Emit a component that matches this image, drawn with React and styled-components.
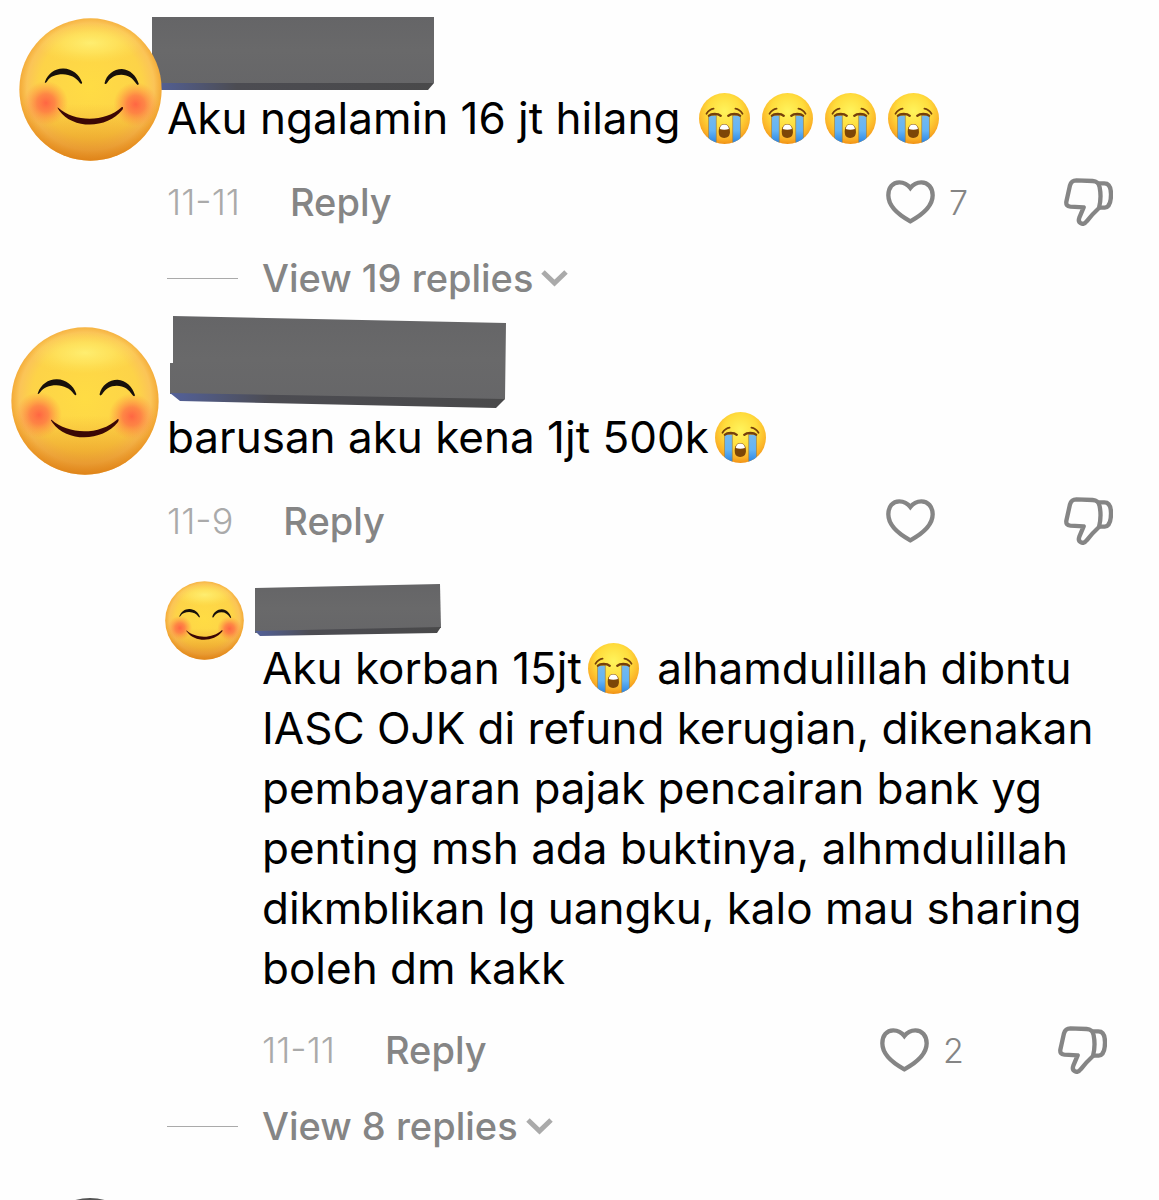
import { useId } from "react";
import styled, { createGlobalStyle } from "styled-components";

const comments = [
    {
        id: 1,
        avatar: { size: 143, left: 19, top: 18 },
        mask: {
            width: 282, height: 74, left: -15, top: 17, bottom: -3,
            face: "0,0 282,0 282,66 274,67 0,67",
            edge: "0,66 282,66 276,73 0,73"
        },
        text: "Aku ngalamin 16 jt hilang 😭😭😭😭",
        date: "11-11",
        likes: 7,
        more: "View 19 replies",
        replies: []
    },
    {
        id: 2,
        avatar: { size: 148, left: 11, top: 19 },
        mask: {
            width: 336, height: 92, left: 3, top: 8, bottom: -1,
            face: "3,0 336,7 335,83 326,86 0,78 0,47 3,47",
            edge: "0,77 335,83 326,92 10,85"
        },
        text: "barusan aku kena 1jt 500k😭",
        date: "11-9",
        replies: [
            {
                id: 3,
                avatar: { size: 79, left: -2, top: 30 },
                mask: {
                    width: 186, height: 52, left: -7, top: 33, bottom: 2,
                    face: "0,4 185,0 186,44 0,49",
                    edge: "0,47 186,43 182,49 5,52"
                },
                text: "Aku korban 15jt😭 alhamdulillah dibntu IASC OJK di refund kerugian, dikenakan pembayaran pajak pencairan bank yg penting msh ada buktinya, alhmdulillah dikmblikan lg uangku, kalo mau sharing boleh dm kakk",
                date: "11-11",
                likes: 2
            }
        ],
        more: "View 8 replies"
    }
];

function SmileFace({ size }) {
    const id = useId();
    return (
        <svg width={size} height={size} viewBox="0 0 424 424" role="img" aria-label="Avatar">
            <defs>
                <radialGradient id={`${id}skin`} cx="50%" cy="48%" r="52%">
                    <stop offset="0" stopColor="#ffdc44" />
                    <stop offset="0.7" stopColor="#fdd348" />
                    <stop offset="0.86" stopColor="#fbc457" />
                    <stop offset="1" stopColor="#f0a02a" />
                </radialGradient>
                <linearGradient id={`${id}shade`} x1="0" y1="0" x2="0" y2="1">
                    <stop offset="0.6" stopColor="#e78a1e" stopOpacity="0" />
                    <stop offset="1" stopColor="#d87812" stopOpacity="0.7" />
                </linearGradient>
                <radialGradient id={`${id}shine`}>
                    <stop offset="0" stopColor="#fff47a" stopOpacity="0.8" />
                    <stop offset="0.5" stopColor="#ffee6c" stopOpacity="0.5" />
                    <stop offset="1" stopColor="#ffe65a" stopOpacity="0" />
                </radialGradient>
                <radialGradient id={`${id}cheek`}>
                    <stop offset="0" stopColor="#ff5a42" stopOpacity="0.9" />
                    <stop offset="0.4" stopColor="#ff6644" stopOpacity="0.7" />
                    <stop offset="1" stopColor="#ff8a40" stopOpacity="0" />
                </radialGradient>
            </defs>
            <circle cx="212" cy="212" r="211" fill={`url(#${id}skin)`} />
            <circle cx="212" cy="212" r="211" fill={`url(#${id}shade)`} />
            <ellipse cx="212" cy="74" rx="160" ry="60" fill={`url(#${id}shine)`} />
            <circle cx="80" cy="252" r="66" fill={`url(#${id}cheek)`} />
            <circle cx="346" cy="256" r="66" fill={`url(#${id}cheek)`} />
            <path d="M77 189C86 164 108 149 132 150C158 151 178 167 187 191C188 196 183 197 180 192C169 176 152 168 130 167C109 167 93 173 83 188C80 193 75 193 77 189Z" fill="#17100b" />
            <path d="M254 192C259 168 281 151 305 151C330 153 348 171 355 195C355 200 350 199 348 195C338 179 324 168 303 168C284 168 270 177 261 193C258 197 253 197 254 192Z" fill="#17100b" />
            <path d="M116 266C166 310 255 310 305 264C310 262 309 269 306 273C262 329 160 331 119 274C115 269 113 264 116 266Z" fill="#3b0705" />
        </svg>
    );
}

function CryFace() {
    const id = useId();
    return (
        <Emoji viewBox="0 0 150 150" role="img" aria-label="😭">
            <defs>
                <radialGradient id={`${id}skin`} cx="50%" cy="36%" r="66%">
                    <stop offset="0" stopColor="#fff45c" />
                    <stop offset="0.5" stopColor="#ffdc3c" />
                    <stop offset="0.82" stopColor="#fbb127" />
                    <stop offset="1" stopColor="#ee8c12" />
                </radialGradient>
                <linearGradient id={`${id}tear`} x1="0" y1="0" x2="0" y2="1">
                    <stop offset="0" stopColor="#75b9ec" />
                    <stop offset="0.5" stopColor="#63b4f5" />
                    <stop offset="1" stopColor="#1d78dd" />
                </linearGradient>
                <clipPath id={`${id}round`}>
                    <circle cx="75" cy="75" r="75" />
                </clipPath>
            </defs>
            <circle cx="75" cy="75" r="75" fill={`url(#${id}skin)`} />
            <g clipPath={`url(#${id}round)`} stroke="#a9853b" strokeWidth="2">
                <path d="M28 66H51V156H28Z" fill={`url(#${id}tear)`} />
                <path d="M99 66H122V156H99Z" fill={`url(#${id}tear)`} />
            </g>
            <g fill="none" stroke="#75400b" strokeLinecap="round">
                <path d="M22 61C27 53 34 47 43 46M128 61C123 53 116 47 107 46" strokeWidth="5" />
                <path d="M29 67C36 60 56 60 64 67M86 67C94 60 114 60 121 67" strokeWidth="7" />
            </g>
            <path d="M58 114C58 100 64 91 74 91C85 91 91 100 91 114C91 127 84 132 74 132C64 132 58 127 58 114Z" fill="#7d4607" />
            <path d="M61 106C62 97 67 93 74 93C82 93 87 97 88 106C80 109 69 109 61 106Z" fill="#fff" />
        </Emoji>
    );
}

function HeartIcon() {
    return (
        <svg width="49" height="44" viewBox="0 0 147 132" fill="none" stroke="currentColor" strokeWidth="13" aria-hidden="true">
            <path d="M73 24C64 12 52 7 40 7C20 7 7 23 7 46C7 80 38 105 73 124C108 105 140 80 140 46C140 23 126 7 106 7C94 7 82 12 73 24Z" />
        </svg>
    );
}

function DislikeIcon() {
    return (
        <svg width="49" height="48" viewBox="0 0 147 144" fill="none" stroke="currentColor" strokeWidth="13" strokeLinejoin="round" aria-hidden="true">
            <path d="M37 7L86 9C99 10 104 15 107 28C111 49 110 71 105 90C92 102 78 117 68 130C63 137 57 139 51 136C45 133 43 127 46 119L59 88L19 86C9 85 6 80 7 71L18 22C21 11 26 7 37 7Z" />
            <path d="M104 16H121C135 16 141 29 141 49C141 74 135 88 122 89H106" />
        </svg>
    );
}

function NameMask({ mask }) {
    const id = useId();
    return (
        <MaskShape
            width={mask.width}
            height={mask.height}
            $left={mask.left}
            $top={mask.top}
            $bottom={mask.bottom}
            aria-hidden="true"
        >
            <defs>
                <linearGradient id={`${id}edge`}>
                    <stop offset="0" stopColor="#53619a" />
                    <stop offset="0.3" stopColor="#4c4c52" />
                    <stop offset="1" stopColor="#49494a" />
                </linearGradient>
                <linearGradient id={`${id}face`} x1="0" y1="0" x2="0" y2="1">
                    <stop offset="0" stopColor="#656567" />
                    <stop offset="0.5" stopColor="#69696a" />
                    <stop offset="1" stopColor="#666668" />
                </linearGradient>
            </defs>
            <polygon points={mask.face} fill={`url(#${id}face)`} />
            <polygon points={mask.edge} fill={`url(#${id}edge)`} />
        </MaskShape>
    );
}

function CommentText({ children }) {
    return (
        <Text>
            {Array.from(children).reduce((parts, char, i) => {
                if (char === "😭") {
                    parts.push(<CryFace key={i} />);
                } else if (typeof parts[parts.length - 1] === "string") {
                    parts[parts.length - 1] += char;
                } else {
                    parts.push(char);
                }
                return parts;
            }, [])}
        </Text>
    );
}

function Comment({ comment, nested }) {
    return (
        <Row $nested={nested}>
            <AvatarSlot $left={comment.avatar.left} $top={comment.avatar.top}>
                <SmileFace size={comment.avatar.size} />
            </AvatarSlot>
            <Body>
                <NameMask mask={comment.mask} />
                <CommentText>{comment.text}</CommentText>
                <Meta $nested={nested}>
                    <time>{comment.date}</time>
                    <ReplyButton type="button">Reply</ReplyButton>
                    <Actions>
                        <LikeButton type="button" aria-label="Like">
                            <HeartIcon />
                            {comment.likes}
                        </LikeButton>
                        <IconButton type="button" aria-label="Dislike">
                            <DislikeIcon />
                        </IconButton>
                    </Actions>
                </Meta>
            </Body>
        </Row>
    );
}

export default function App() {
    return (
        <Main>
            <GlobalStyle />
            {comments.map(comment => (
                <Thread key={comment.id}>
                    <Comment comment={comment} />
                    {comment.replies.map(reply => (
                        <Comment key={reply.id} comment={reply} nested />
                    ))}
                    <MoreButton type="button">
                        <Line />
                        {comment.more}
                        <svg width="27" height="18" viewBox="0 0 27 18" fill="none" stroke="#aaa" strokeWidth="5" aria-hidden="true">
                            <path d="M2 3L13.5 14L25 3" />
                        </svg>
                    </MoreButton>
                </Thread>
            ))}
            <NextAvatar>
                <svg width="108" height="108" viewBox="0 0 108 108" aria-hidden="true">
                    <circle cx="54" cy="54" r="54" fill="#555" />
                </svg>
            </NextAvatar>
        </Main>
    );
}

const GlobalStyle = createGlobalStyle`
    body {
        margin: 0;
        background-color: #fefefe;
        font-family: Inter, "Noto Sans", sans-serif;
    }

    button {
        padding: 0;
        border: none;
        background: none;
        font-family: inherit;
        cursor: pointer;
    }

    svg {
        display: block;
        flex-shrink: 0;
    }
`;

const Main = styled.main`
    height: 100vh;
    overflow: hidden;
`;

const Thread = styled.section`
    display: flex;
    flex-direction: column;
`;

const Row = styled.article`
    display: grid;
    grid-template-columns: ${({ $nested }) => ($nested ? "95px" : "167px")} minmax(0, 1fr);
    margin-left: ${({ $nested }) => ($nested ? "167px" : "0")};
`;

const AvatarSlot = styled.div`
    z-index: 1;
    padding-top: ${({ $top }) => $top}px;
    margin-left: ${({ $left }) => $left}px;
`;

const Body = styled.div`
    display: flex;
    flex-direction: column;
`;

const MaskShape = styled.svg`
    margin-top: ${({ $top }) => $top}px;
    margin-bottom: ${({ $bottom }) => $bottom}px;
    margin-left: ${({ $left }) => $left}px;
`;

const Text = styled.p`
    margin: 0;
    padding-right: 60px;
    color: #000;
    font-size: 44px;
    line-height: 60px;
`;

const Emoji = styled.svg`
    display: inline-block;
    width: 51px;
    height: 51px;
    margin: 0 6px;
    vertical-align: -10px;
`;

const Meta = styled.div`
    display: flex;
    align-items: center;
    height: 60px;
    margin-top: ${({ $nested }) => ($nested ? "22px" : "24px")};
    padding-right: ${({ $nested }) => ($nested ? "52px" : "46px")};

    time {
        color: #aaa;
        font-size: 36px;
        font-weight: 300;
    }
`;

const ReplyButton = styled.button`
    margin-left: 50px;
    color: #858585;
    font-size: 38px;
    font-weight: 500;
`;

const Actions = styled.div`
    display: flex;
    align-items: center;
    margin-left: auto;
`;

const LikeButton = styled.button`
    display: flex;
    align-items: center;
    gap: 14px;
    width: 178px;
    color: #858585;
    font-size: 34px;
    font-weight: 300;
`;

const IconButton = styled.button`
    color: #858585;
`;

const MoreButton = styled.button`
    display: flex;
    align-items: center;
    align-self: flex-start;
    gap: 8px;
    height: 60px;
    margin-top: 16px;
    margin-left: 167px;
    color: #858585;
    font-size: 38px;
    font-weight: 500;
`;

const Line = styled.span`
    width: 71px;
    height: 1px;
    margin-right: 16px;
    background-color: #aaa;
`;

const NextAvatar = styled.div`
    margin-top: 42px;
    margin-left: 36px;
`;
